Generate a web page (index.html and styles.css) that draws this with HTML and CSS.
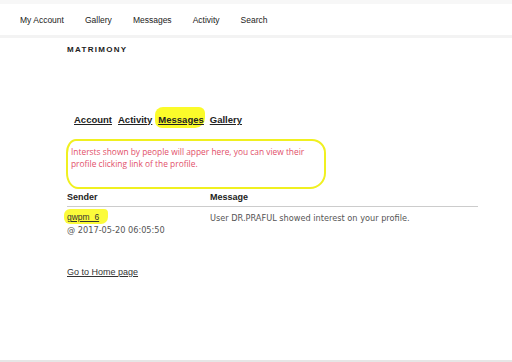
FILE: index.html
```html
<!DOCTYPE html>
<html>
<head>
<meta charset="utf-8">
<link rel="stylesheet" href="styles.css">
</head>
<body>
<div class="topstrip"></div>
<nav class="nav">
  <a>My Account</a>
  <a>Gallery</a>
  <a>Messages</a>
  <a>Activity</a>
  <a>Search</a>
</nav>
<main class="page">
  <div class="brand">MATRIMONY</div>
  <div class="tabs">
    <a>Account</a>
    <a>Activity</a>
    <a class="hl-wrap"><span class="hl-messages"></span><span class="tab-text">Messages</span></a>
    <a>Gallery</a>
  </div>
  <div class="note">
    <span class="note-ring"></span>
    <p>Intersts shown by people will apper here, you can view their profile clicking link of the profile.</p>
  </div>
  <table class="msgs">
    <thead>
      <tr><th class="c1">Sender</th><th>Message</th></tr>
    </thead>
    <tbody>
      <tr>
        <td class="c1">
          <a class="sender"><span class="hl-sender"></span><span class="sender-text">gwpm_6</span></a>
          <div class="date">@ 2017-05-20 06:05:50</div>
        </td>
        <td class="msg">User DR.PRAFUL showed interest on your profile.</td>
      </tr>
    </tbody>
  </table>
  <a class="home">Go to Home page</a>
</main>
<div class="bottomline"></div>
</body>
</html>
```
FILE: styles.css
```css
html, body {
  margin: 0;
  padding: 0;
  background: #fff;
}
body {
  width: 512px;
  height: 362px;
  position: relative;
  overflow: hidden;
  font-family: "Liberation Sans", Arial, sans-serif;
  color: #222;
}
.topstrip {
  height: 4px;
  background: #f7f7f7;
}
.nav {
  height: 31px;
  display: flex;
  align-items: center;
  padding-left: 20px;
  border-bottom: 3px solid #f3f3f3;
  font-size: 8.5px;
}
.nav a {
  margin-right: 21px;
  color: #222;
}
.page {
  padding-left: 67px;
}
.brand {
  margin-top: 7px;
  font-size: 8px;
  font-weight: bold;
  letter-spacing: 1.3px;
  color: #222;
}
.tabs {
  margin-top: 60px;
  padding-left: 7px;
  display: flex;
  gap: 6px;
  font-size: 9.5px;
  font-weight: bold;
  position: relative;
}
.tabs a {
  color: #222;
  text-decoration: underline;
  position: relative;
}
.hl-wrap {
  position: relative;
}
.tab-text {
  position: relative;
  text-decoration: underline;
}
.hl-messages {
  position: absolute;
  left: -3px;
  top: -7px;
  width: 50px;
  height: 21px;
  background: #fbfb2a;
  border-radius: 8px 6px 10px 7px;
}
.note {
  position: relative;
  margin-top: 14px;
  height: 50px;
  width: 260px;
}
.note p {
  margin: 0;
  padding: 7px 0 0 4px;
  font-family: "Open Sans", sans-serif;
  font-size: 8.4px;
  line-height: 12px;
  color: #e2506a;
  width: 250px;
}
.note-ring {
  position: absolute;
  left: -1px;
  top: 0;
  width: 256px;
  height: 46px;
  border: 2px solid #f0f020;
  border-radius: 10px 14px 16px 12px / 14px 14px 16px 16px;
}
.msgs {
  border-collapse: collapse;
  width: 411px;
  margin-top: 0;
}
.msgs th {
  text-align: left;
  font-size: 9px;
  font-weight: bold;
  padding: 3px 0 4px 0;
  border-bottom: 1px solid #ccc;
  color: #222;
}
.msgs .c1 {
  width: 143px;
}
.msgs td {
  vertical-align: top;
  padding: 5px 0 0 0;
  font-family: "DejaVu Sans", Verdana, sans-serif;
  font-size: 8.2px;
  color: #555;
}
.sender {
  position: relative;
  display: inline-block;
  font-family: "Liberation Sans", Arial, sans-serif;
  font-size: 8.5px;
  color: #333;
}
.sender-text {
  position: relative;
  text-decoration: underline;
}
.hl-sender {
  position: absolute;
  left: -3px;
  top: -3px;
  width: 44px;
  height: 15px;
  background: #fbfb3a;
  border-radius: 6px 4px 7px 6px;
}
.date {
  margin-top: 3px;
  color: #555;
}
.msg {
  padding-top: 6px !important;
}
.home {
  display: inline-block;
  margin-top: 32px;
  font-size: 9px;
  color: #333;
  text-decoration: underline;
}
.bottomline {
  position: absolute;
  left: 0;
  right: 0;
  bottom: 0;
  height: 2px;
  background: #e6e6e6;
}
```
